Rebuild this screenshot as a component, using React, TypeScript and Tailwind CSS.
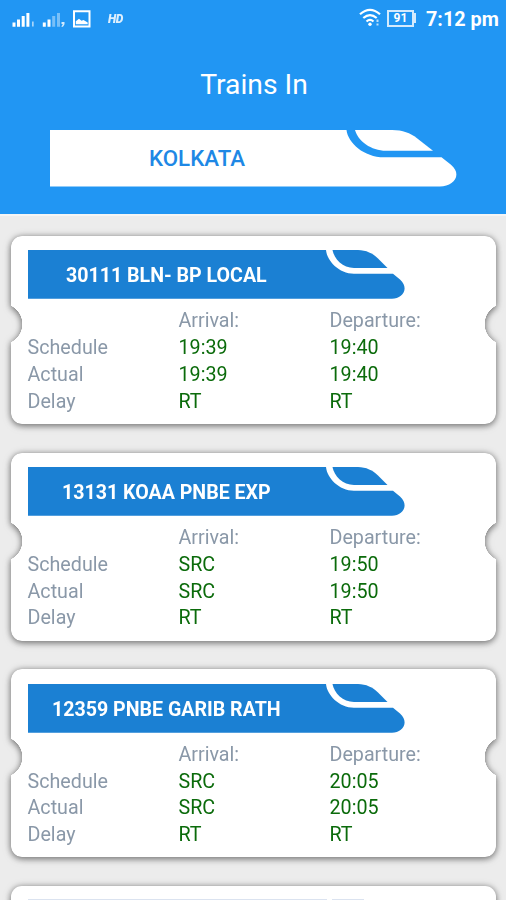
import React from "react";

type Train = {
  name: string;
  nameClass: string;
  arrival: string[];
  departure: string[];
};

const trains: Train[] = [
  {
    name: "30111 BLN- BP LOCAL",
    nameClass: "w-[201px]",
    arrival: ["19:39", "19:39", "RT"],
    departure: ["19:40", "19:40", "RT"],
  },
  {
    name: "13131 KOAA PNBE EXP",
    nameClass: "w-[209px]",
    arrival: ["SRC", "SRC", "RT"],
    departure: ["19:50", "19:50", "RT"],
  },
  {
    name: "12359 PNBE GARIB RATH",
    nameClass: "w-[229px]",
    arrival: ["SRC", "SRC", "RT"],
    departure: ["20:05", "20:05", "RT"],
  },
];

const labels = ["Schedule", "Actual", "Delay"];

function StatusBar() {
  return (
    <div className="flex h-[37px] items-center justify-between pl-3 pr-2 text-white">
      <div className="flex items-center">
        <svg width="24" height="18" viewBox="0 0 24 18" fill="currentColor">
          <path d="M.5 12.500h3v4.200h-3zM5 9.500h3v7.200H5zM9.700 6h3v10.700h-3zM14.400 3h3v13.700h-3z" />
          <path d="M20 11.500h1.700v5H20z" opacity=".6" />
        </svg>
        <svg
          className="ml-[6px]"
          width="25"
          height="18"
          viewBox="0 0 25 18"
          fill="currentColor"
        >
          <path d="M.8 12.500h3v4.200h-3zM5.500 9.500h3v7.200h-3z" />
          <path d="M10.200 6h3v10.700h-3zM15 3h3v13.700h-3z" opacity=".4" />
          <path d="M19.500 12h3v2.200L21 16.700h-1.700l1.500-2.700h-1.300z" opacity=".8" />
        </svg>
        <svg
          className="ml-[5px]"
          width="20"
          height="18"
          viewBox="0 0 20 18"
          fill="none"
        >
          <path d="M2 1.200h15.500v15.300H2z" stroke="currentColor" strokeWidth="2" />
          <path
            d="M3.800 14.200v-3l3.200-2.400 2.500 2 2-.8 4.200 2.400v1.800z"
            fill="currentColor"
          />
        </svg>
        <span className="ml-[16px] text-[12px] font-black italic leading-none tracking-[-0.5px] opacity-85">
          HD
        </span>
      </div>
      <div className="flex items-center">
        <svg width="23" height="20" viewBox="0 0 23 20" fill="none">
          <g stroke="currentColor" strokeWidth="2.200">
            <path d="M1 6.300Q11 -2.700 21 6.300" />
            <path d="M4.300 10Q11 4.100 17.700 10" />
            <path d="M7.500 13.500Q11 10.400 14.500 13.500" />
          </g>
          <circle cx="11" cy="16.200" r="1.700" fill="currentColor" />
          <path
            d="M18.500 11.500v2.500M18.500 15.500v2"
            stroke="currentColor"
            strokeWidth="2"
            opacity=".7"
          />
        </svg>
        <div className="ml-[5px] flex h-[17px] w-[27px] items-center justify-center border-2 border-white/80 text-[12px] font-bold leading-none">
          91
        </div>
        <div className="h-[10px] w-[2px] bg-white/80" />
        <span className="ml-[10px] w-[72px] whitespace-nowrap pt-[2px] text-[19.8px] font-bold leading-none">
          7:12 pm
        </span>
      </div>
    </div>
  );
}

function StationTrain() {
  return (
    <div className="relative ml-[50px] h-[57px] w-[407px]">
      <svg
        className="absolute inset-0"
        width="407"
        height="57"
        viewBox="0 0 407 57"
        fill="#fff"
      >
        <path d="M0 0H296.500C298 13 314 27.300 334 27.300H391.500L401 34.800C413 45 403 56.500 390 56.500H0Z" />
        <path d="M305 0H342C353 0 360 3 367 8.200L383 20.800H336C321 20.800 308 11 305 0Z" />
      </svg>
      <div className="relative flex h-full w-[294px] items-center justify-center text-[22.3px] font-medium text-[#1e88e5]">
        KOLKATA
      </div>
    </div>
  );
}

function TrainBanner({ train }: { train: Train }) {
  return (
    <div className="relative h-[49px] w-[377px]">
      <svg
        className="absolute inset-0"
        width="377"
        height="49"
        viewBox="0 0 377 49"
        fill="#1b80d3"
      >
        <path d="M0 0H298C299 11 311 23.700 326 23.700H365L372 29.500C382 39 374 48.700 364 48.700H0Z" />
        <path d="M304.500 0H330C338 0 345 3.500 350 8.500L359.500 18H326C315 18 306 9 304.500 0Z" />
      </svg>
      <div className="relative flex h-full w-[278px] items-center justify-center whitespace-nowrap pt-[3px] text-[19.6px] font-bold text-white">
        <span className={train.nameClass}>{train.name}</span>
      </div>
    </div>
  );
}

function TrainCard({ train }: { train: Train }) {
  return (
    <div className="h-[188px] shrink-0 [filter:drop-shadow(0_2px_3px_rgba(0,0,0,0.38))_drop-shadow(0_0_3px_rgba(0,0,0,0.25))]">
      <div className="h-full rounded-[11px] bg-white pl-[16.5px] pt-[14.2px] [mask-composite:intersect] [mask-image:radial-gradient(circle_at_-9px_88px,transparent_20px,#000_20.5px),radial-gradient(circle_at_calc(100%_+_9px)_88px,transparent_20px,#000_20.5px)]">
        <TrainBanner train={train} />
        <div className="mt-[9.3px] grid grid-cols-[151px_151px_1fr] text-[19.7px] leading-[26.7px] text-[#8a98a8]">
          <span />
          <span>Arrival:</span>
          <span>Departure:</span>
          {labels.map((label, i) => (
            <React.Fragment key={label}>
              <span>{label}</span>
              <span className="text-[#0b6b0b]">{train.arrival[i]}</span>
              <span className="text-[#0b6b0b]">{train.departure[i]}</span>
            </React.Fragment>
          ))}
        </div>
      </div>
    </div>
  );
}

export default function App() {
  return (
    <div className="flex h-[900px] w-[506px] flex-col overflow-hidden bg-[#ececec] font-['Roboto',sans-serif]">
      <header className="h-[214px] shrink-0 bg-[#2196f3]">
        <StatusBar />
        <h1 className="mb-[25.5px] mt-[27.5px] pl-[2px] text-center text-[28.3px] leading-[40px] text-white">
          Trains In
        </h1>
        <StationTrain />
      </header>
      <div className="h-[2px] shrink-0 bg-[#f5f5f5]" />
      <main className="flex flex-col gap-[28.7px] pl-[11px] pr-[10px] pt-[20px]">
        {trains.map((train) => (
          <TrainCard key={train.name} train={train} />
        ))}
        <div className="h-[188px] shrink-0 rounded-[11px] bg-white pl-[16.5px] pt-[12.5px] [filter:drop-shadow(0_2px_3px_rgba(0,0,0,0.38))_drop-shadow(0_0_3px_rgba(0,0,0,0.25))]">
          <div className="flex gap-[5px]">
            <div className="h-[2px] w-[299px] bg-[#dbe3f0]" />
            <div className="h-[2px] w-[32px] bg-[#dbe3f0]" />
          </div>
        </div>
      </main>
    </div>
  );
}
